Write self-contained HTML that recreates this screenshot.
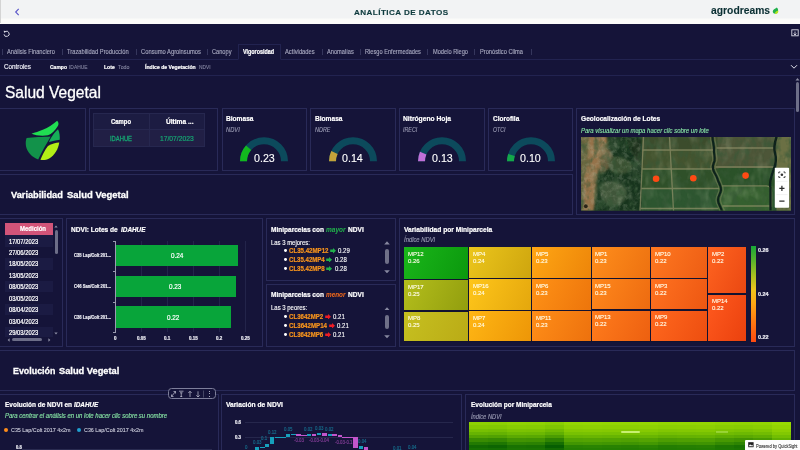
<!DOCTYPE html>
<html lang="es">
<head>
<meta charset="utf-8">
<title>Analítica de Datos</title>
<style>
*{box-sizing:border-box;margin:0;padding:0}
html,body{width:800px;height:450px;overflow:hidden;background:#151439;font-family:"Liberation Sans",sans-serif;color:#fff}
#root{position:relative;width:800px;height:450px;overflow:hidden;background:#151439}
.abs{position:absolute}
.hdr{left:0;top:0;width:800px;height:23.500px;background:linear-gradient(180deg,#f2f3f4 0,#f2f3f4 17.500px,#fbfbf9 19.500px,#fbfbf9 100%)}
.sep{top:49px;width:1px;height:6px;background:#35365c}
.hl{height:1px;background:#222350;left:0;width:800px}
.card{position:absolute;border:1px solid #292a58;background:#151439}
.t{position:absolute;white-space:nowrap}
.tm{position:absolute;overflow:hidden}
</style>
</head>
<body>
<div id="root">

<div class="abs hdr"></div>
<div class="abs" style="left:0;top:0;width:1.300px;height:23px;background:#d4d4d4"></div>
<svg class="abs" style="left:14px;top:7.500px" width="6" height="8" viewBox="0 0 6 8"><path d="M4.700 0.900 L1.700 4 L4.700 7.100" fill="none" stroke="#5b57c9" stroke-width="1.150"/></svg>
<div class="t" style="left:353.70px;top:8px;font-size:8.1px;line-height:9px;height:9px;color:#0f3b3e;font-weight:bold;-webkit-text-stroke:0.15px;letter-spacing:0.435px;transform:scaleX(1.0001);transform-origin:0 0;">ANALÍTICA DE DATOS</div>
<div class="t" style="left:710.90px;top:5px;font-size:10.3px;line-height:11px;height:11px;color:#0b2f33;font-weight:bold;-webkit-text-stroke:0.1px;letter-spacing:0.015px;transform:scaleX(1.0001);transform-origin:0 0;">agrodreams</div>
<svg class="abs" style="left:772px;top:7px" width="7.400" height="7.800" viewBox="0 0 10 10"><path d="M1 6 C1 3 4 2.500 6.500 0.500 C8.500 2 9 5 7 7.500 C5 9.500 1.500 9 1 6Z" fill="#22b14c"/><path d="M4 9 C4 6 6 5 8.600 4.400 C9 7 7 9.500 4 9Z" fill="#b5e61d"/></svg>
<svg class="abs" style="left:3px;top:29.500px" width="8" height="8" viewBox="0 0 8 8"><path d="M2 1.800 A2.600 2.600 0 1 1 1 4.300" fill="none" stroke="#dcdce8" stroke-width="0.950"/><path d="M0.700 0.800 L2.900 1 L1.300 3Z" fill="#dcdce8"/></svg>
<svg class="abs" style="left:790.500px;top:29.300px" width="8" height="8" viewBox="0 0 8 8"><rect x="0.800" y="0.800" width="6.400" height="6" fill="none" stroke="#d8d8e4" stroke-width="0.900"/><path d="M4 2.500 V6 M2.600 4.600 L4 6 L5.400 4.600" stroke="#d8d8e4" stroke-width="0.900" fill="none"/></svg>
<div class="t" style="left:7.00px;top:48px;font-size:6.4px;line-height:7px;height:7px;color:#a9aac0;-webkit-text-stroke:0.12px;transform:scaleX(0.8936);transform-origin:0 0;">Análisis Financiero</div>
<div class="t" style="left:67.00px;top:48px;font-size:6.4px;line-height:7px;height:7px;color:#a9aac0;-webkit-text-stroke:0.12px;transform:scaleX(0.9025);transform-origin:0 0;">Trazabilidad Producción</div>
<div class="t" style="left:141.00px;top:48px;font-size:6.4px;line-height:7px;height:7px;color:#a9aac0;-webkit-text-stroke:0.12px;transform:scaleX(0.9068);transform-origin:0 0;">Consumo Agroinsumos</div>
<div class="t" style="left:212.00px;top:48px;font-size:6.4px;line-height:7px;height:7px;color:#a9aac0;-webkit-text-stroke:0.12px;transform:scaleX(0.8840);transform-origin:0 0;">Canopy</div>
<div class="t" style="left:285.00px;top:48px;font-size:6.4px;line-height:7px;height:7px;color:#a9aac0;-webkit-text-stroke:0.12px;transform:scaleX(0.9090);transform-origin:0 0;">Actividades</div>
<div class="t" style="left:326.75px;top:48px;font-size:6.4px;line-height:7px;height:7px;color:#a9aac0;-webkit-text-stroke:0.12px;transform:scaleX(0.8846);transform-origin:0 0;">Anomalías</div>
<div class="t" style="left:365.00px;top:48px;font-size:6.4px;line-height:7px;height:7px;color:#a9aac0;-webkit-text-stroke:0.12px;transform:scaleX(0.8843);transform-origin:0 0;">Riesgo Enfermedades</div>
<div class="t" style="left:433.00px;top:48px;font-size:6.4px;line-height:7px;height:7px;color:#a9aac0;-webkit-text-stroke:0.12px;transform:scaleX(0.8863);transform-origin:0 0;">Modelo Riego</div>
<div class="t" style="left:480.00px;top:48px;font-size:6.4px;line-height:7px;height:7px;color:#a9aac0;-webkit-text-stroke:0.12px;transform:scaleX(0.8889);transform-origin:0 0;">Pronóstico Clima</div>
<div class="abs sep" style="left:2px"></div>
<div class="abs sep" style="left:62px"></div>
<div class="abs sep" style="left:136px"></div>
<div class="abs sep" style="left:207px"></div>
<div class="abs sep" style="left:322px"></div>
<div class="abs sep" style="left:360px"></div>
<div class="abs sep" style="left:426.5px"></div>
<div class="abs sep" style="left:474px"></div>
<div class="abs sep" style="left:530.5px"></div>
<div class="abs hl" style="top:59px"></div>
<div class="abs" style="left:238px;top:44px;width:43px;height:16px;border:1px solid #222350;border-bottom:1px solid #151439"></div>
<div class="t" style="left:243.00px;top:48px;font-size:6.3px;line-height:7px;height:7px;color:#fff;font-weight:bold;-webkit-text-stroke:0.22px;transform:scaleX(0.8542);transform-origin:0 0;">Vigorosidad</div>
<div class="t" style="left:3.75px;top:63px;font-size:6.6px;line-height:7px;height:7px;color:#eeeef6;-webkit-text-stroke:0.18px;transform:scaleX(0.9558);transform-origin:0 0;">Controles</div>
<div class="t" style="left:50.00px;top:63px;font-size:6.2px;line-height:7px;height:7px;color:#fff;font-weight:bold;-webkit-text-stroke:0.22px;transform:scaleX(0.8090);transform-origin:0 0;">Campo</div>
<div class="t" style="left:69.00px;top:63px;font-size:6.2px;line-height:7px;height:7px;color:#8586a2;-webkit-text-stroke:0.12px;transform:scaleX(0.7897);transform-origin:0 0;">IDAHUE</div>
<div class="t" style="left:103.75px;top:63px;font-size:6.2px;line-height:7px;height:7px;color:#fff;font-weight:bold;-webkit-text-stroke:0.22px;transform:scaleX(0.8214);transform-origin:0 0;">Lote</div>
<div class="t" style="left:117.50px;top:63px;font-size:6.2px;line-height:7px;height:7px;color:#8586a2;-webkit-text-stroke:0.12px;transform:scaleX(0.8553);transform-origin:0 0;">Todo</div>
<div class="t" style="left:145.00px;top:63px;font-size:6.2px;line-height:7px;height:7px;color:#fff;font-weight:bold;-webkit-text-stroke:0.22px;transform:scaleX(0.8275);transform-origin:0 0;">Índice de Vegetación</div>
<div class="t" style="left:198.50px;top:63px;font-size:6.2px;line-height:7px;height:7px;color:#8586a2;-webkit-text-stroke:0.12px;transform:scaleX(0.7763);transform-origin:0 0;">NDVI</div>
<svg class="abs" style="left:790px;top:64px" width="8" height="6" viewBox="0 0 8 6"><path d="M1 1.200 L4 4.200 L7 1.200" fill="none" stroke="#e0e0ea" stroke-width="1"/></svg>
<div class="abs hl" style="top:75px"></div>
<div class="t" style="left:4.50px;top:84px;font-size:15.7px;line-height:17px;height:17px;color:#fff;-webkit-text-stroke:0.3px;transform:scaleX(0.9907);transform-origin:0 0;">Salud Vegetal</div>
<div class="abs" style="left:796px;top:82px;width:3px;height:30px;background:#6d6e88;border-radius:2px"></div>
<svg class="abs" style="left:795px;top:77px" width="5" height="4" viewBox="0 0 5 4"><path d="M0.500 3.500 L2.500 1 L4.500 3.500Z" fill="#8c8da4"/></svg>
<div class="card" style="left:-1px;top:108px;width:87px;height:63px;"></div>
<div class="card" style="left:89px;top:108px;width:129px;height:63px;"></div>
<div class="card" style="left:222px;top:108px;width:85px;height:63px;"></div>
<div class="card" style="left:310px;top:108px;width:86px;height:63px;"></div>
<div class="card" style="left:399px;top:108px;width:86px;height:63px;"></div>
<div class="card" style="left:488px;top:108px;width:85px;height:63px;"></div>
<div class="card" style="left:576px;top:108px;width:219px;height:107px;"></div>
<div class="card" style="left:-1px;top:174px;width:574px;height:41px;"></div>
<div class="card" style="left:-1px;top:218px;width:64px;height:129px;"></div>
<div class="card" style="left:66px;top:218px;width:197px;height:129px;"></div>
<div class="card" style="left:266px;top:218px;width:130px;height:63px;"></div>
<div class="card" style="left:266px;top:284px;width:130px;height:63px;"></div>
<div class="card" style="left:399px;top:218px;width:396px;height:129px;"></div>
<div class="card" style="left:-1px;top:350px;width:796px;height:41px;"></div>
<div class="card" style="left:-1px;top:394px;width:220px;height:66px;"></div>
<div class="card" style="left:221px;top:394px;width:241px;height:66px;"></div>
<div class="card" style="left:465px;top:394px;width:330px;height:66px;"></div>
<svg class="abs" style="left:15px;top:112px" width="60" height="55" viewBox="0 0 491 450">
<path d="M135 178 C190 160 270 140 345 72 C358 85 358 100 352 112 C330 150 300 180 270 190 C220 198 170 192 135 178Z" fill="#20de52"/>
<path d="M95 212 C150 204 230 204 292 200 C260 260 220 320 190 388 C140 370 100 330 90 280 C86 250 88 230 95 212Z" fill="#12924a"/>
<path d="M352 142 C365 170 368 200 366 228 C335 232 305 238 278 246 C290 220 310 180 352 142Z" fill="#16ae58"/>
<path d="M362 250 C355 300 330 350 280 380 C255 392 230 395 208 390 C225 350 245 310 270 278 C300 262 335 252 362 250Z" fill="#b2ee16"/>
</svg>
<div class="abs" style="left:93px;top:112.600px;width:111.500px;height:17px;background:#1c1c42"></div>
<div class="abs" style="left:93px;top:129.600px;width:111.500px;height:17.900px;background:#211f45"></div>
<div class="abs" style="left:93px;top:112.600px;width:111.500px;height:34.900px;border:1px solid #26274f"></div>
<div class="abs" style="left:93px;top:129.300px;width:111.500px;height:1px;background:#26274f"></div>
<div class="abs" style="left:148.500px;top:112.600px;width:1px;height:34.900px;background:#26274f"></div>
<div class="t" style="left:111.25px;top:118px;font-size:6.6px;line-height:7px;height:7px;color:#fff;font-weight:bold;-webkit-text-stroke:0.22px;transform:scaleX(0.8941);transform-origin:0 0;">Campo</div>
<div class="t" style="left:166.25px;top:118px;font-size:6.6px;line-height:7px;height:7px;color:#fff;font-weight:bold;-webkit-text-stroke:0.22px;transform:scaleX(0.9998);transform-origin:0 0;">Última ...</div>
<div class="t" style="left:110.00px;top:135px;font-size:6.8px;line-height:7px;height:7px;color:#16a472;-webkit-text-stroke:0.3px;transform:scaleX(0.8563);transform-origin:0 0;">IDAHUE</div>
<div class="t" style="left:160.00px;top:135px;font-size:6.8px;line-height:7px;height:7px;color:#16a472;-webkit-text-stroke:0.2px;transform:scaleX(0.9917);transform-origin:0 0;">17/07/2023</div>
<div class="t" style="left:225.75px;top:114px;font-size:7.3px;line-height:9px;height:9px;color:#fff;font-weight:bold;-webkit-text-stroke:0.22px;transform:scaleX(0.9037);transform-origin:0 0;">Biomasa</div>
<div class="t" style="left:225.75px;top:126px;font-size:6.3px;line-height:7px;height:7px;color:#9c9db5;font-style:italic;-webkit-text-stroke:0.12px;transform:scaleX(0.9135);transform-origin:0 0;">NDVI</div>
<svg class="abs" style="left:238px;top:135px" width="52" height="28" viewBox="238 135 52 28"><path d="M243.50 161.30 A20.5 20.5 0 0 1 284.50 161.30" fill="none" stroke="#0c4a5c" stroke-width="7"/><path d="M243.50 161.30 A20.5 20.5 0 0 1 248.62 147.74" fill="none" stroke="#12b81e" stroke-width="7"/></svg>
<div class="t" style="left:253.60px;top:152px;font-size:11.4px;line-height:12px;height:12px;color:#fff;-webkit-text-stroke:0.12px;transform:scaleX(0.9374);transform-origin:0 0;">0.23</div>
<div class="t" style="left:314.50px;top:114px;font-size:7.3px;line-height:9px;height:9px;color:#fff;font-weight:bold;-webkit-text-stroke:0.22px;transform:scaleX(0.9037);transform-origin:0 0;">Biomasa</div>
<div class="t" style="left:314.50px;top:126px;font-size:6.3px;line-height:7px;height:7px;color:#9c9db5;font-style:italic;-webkit-text-stroke:0.12px;transform:scaleX(0.8683);transform-origin:0 0;">NDRE</div>
<svg class="abs" style="left:326.7px;top:135px" width="52" height="28" viewBox="326.7 135 52 28"><path d="M332.20 161.30 A20.5 20.5 0 0 1 373.20 161.30" fill="none" stroke="#0c4a5c" stroke-width="7"/><path d="M332.20 161.30 A20.5 20.5 0 0 1 334.15 152.57" fill="none" stroke="#c3a23a" stroke-width="7"/></svg>
<div class="t" style="left:342.30px;top:152px;font-size:11.4px;line-height:12px;height:12px;color:#fff;-webkit-text-stroke:0.12px;transform:scaleX(0.9374);transform-origin:0 0;">0.14</div>
<div class="t" style="left:403.25px;top:114px;font-size:7.3px;line-height:9px;height:9px;color:#fff;font-weight:bold;-webkit-text-stroke:0.22px;transform:scaleX(0.9175);transform-origin:0 0;">Nitrógeno Hoja</div>
<div class="t" style="left:403.25px;top:126px;font-size:6.3px;line-height:7px;height:7px;color:#9c9db5;font-style:italic;-webkit-text-stroke:0.12px;transform:scaleX(0.8481);transform-origin:0 0;">IRECI</div>
<svg class="abs" style="left:416px;top:135px" width="52" height="28" viewBox="416 135 52 28"><path d="M421.50 161.30 A20.5 20.5 0 0 1 462.50 161.30" fill="none" stroke="#0c4a5c" stroke-width="7"/><path d="M421.50 161.30 A20.5 20.5 0 0 1 423.19 153.16" fill="none" stroke="#c070d8" stroke-width="7"/></svg>
<div class="t" style="left:431.60px;top:152px;font-size:11.4px;line-height:12px;height:12px;color:#fff;-webkit-text-stroke:0.12px;transform:scaleX(0.9374);transform-origin:0 0;">0.13</div>
<div class="t" style="left:492.50px;top:114px;font-size:7.3px;line-height:9px;height:9px;color:#fff;font-weight:bold;-webkit-text-stroke:0.22px;transform:scaleX(0.8866);transform-origin:0 0;">Clorofila</div>
<div class="t" style="left:492.50px;top:126px;font-size:6.3px;line-height:7px;height:7px;color:#9c9db5;font-style:italic;-webkit-text-stroke:0.12px;transform:scaleX(0.8306);transform-origin:0 0;">OTCI</div>
<svg class="abs" style="left:504.79999999999995px;top:135px" width="52" height="28" viewBox="504.79999999999995 135 52 28"><path d="M510.30 161.30 A20.5 20.5 0 0 1 551.30 161.30" fill="none" stroke="#0c4a5c" stroke-width="7"/><path d="M510.30 161.30 A20.5 20.5 0 0 1 511.30 154.97" fill="none" stroke="#14a84a" stroke-width="7"/></svg>
<div class="t" style="left:520.40px;top:152px;font-size:11.4px;line-height:12px;height:12px;color:#fff;-webkit-text-stroke:0.12px;transform:scaleX(0.9374);transform-origin:0 0;">0.10</div>
<div class="t" style="left:580.80px;top:114px;font-size:7.3px;line-height:9px;height:9px;color:#fff;font-weight:bold;-webkit-text-stroke:0.22px;transform:scaleX(0.9039);transform-origin:0 0;">Geolocalización de Lotes</div>
<div class="t" style="left:580.80px;top:127px;font-size:6.6px;line-height:7px;height:7px;color:#86e3a4;font-style:italic;-webkit-text-stroke:0.12px;transform:scaleX(0.9110);transform-origin:0 0;">Para visualizar un mapa hacer clic sobre un lote</div>
<svg class="abs" style="left:580.500px;top:137px" width="210" height="73.500" viewBox="580.500 137 210 73.500">
<defs><clipPath id="mc"><rect x="580.500" y="137" width="210" height="73.500"/></clipPath><clipPath id="mcl"><rect x="580.500" y="137" width="60" height="73.500"/></clipPath><filter id="nz" x="0" y="0" width="100%" height="100%"><feTurbulence type="fractalNoise" baseFrequency="0.16 0.1" numOctaves="3" seed="3" result="n"/><feColorMatrix in="n" type="matrix" values="0 0 0 0 0.04  0 0 0 0 0.1  0 0 0 0 0.04  2.2 2.2 0 0 -2.0"/></filter><filter id="nzl" x="0" y="0" width="100%" height="100%"><feTurbulence type="fractalNoise" baseFrequency="0.22" numOctaves="3" seed="11" result="n"/><feColorMatrix in="n" type="matrix" values="0 0 0 0 0.5  0 0 0 0 0.56  0 0 0 0 0.42  0 2.4 2.0 0 -2.0"/></filter><filter id="nz2" x="0" y="0" width="100%" height="100%"><feTurbulence type="fractalNoise" baseFrequency="0.09 0.05" numOctaves="3" seed="8" result="n"/><feColorMatrix in="n" type="matrix" values="0 0 0 0 0.45  0 0 0 0 0.52  0 0 0 0 0.34  2.4 2.0 0 0 -2.1"/></filter><filter id="bl"><feGaussianBlur stdDeviation="1.1"/></filter><filter id="bl2"><feGaussianBlur stdDeviation="0.45"/></filter></defs><g clip-path="url(#mc)">
<rect x="580" y="136" width="212" height="76" fill="#36502e"/>
<rect x="641" y="137" width="150" height="13" fill="#3c4c2c"/>
<rect x="641" y="150" width="150" height="19" fill="#44542f"/>
<rect x="641" y="169" width="150" height="20" fill="#2f5029"/>
<rect x="641" y="188.500" width="150" height="23" fill="#2d5630"/>
<rect x="717" y="137" width="60" height="31" fill="#4d5638"/>
<rect x="718" y="186" width="54" height="25" fill="#35602f"/>
<rect x="718" y="168" width="56" height="18" fill="#2b5229"/>
<rect x="776" y="137" width="15" height="74" fill="#6b7044"/>
<rect x="580" y="136" width="61" height="76" fill="#17341d"/>
<g filter="url(#bl)"><path d="M580 136 H606 C609 146 606 152 603 160 C598 170 596 178 596 186 C596 196 594 204 593 212 H580Z" fill="#957249"/><path d="M580 136 H588 C590 150 586 165 584 180 C583 195 584 205 583 212 H580Z" fill="#6c6840"/><path d="M600 150 C606 146 612 150 612 158 C611 166 606 172 600 174 C598 166 598 156 600 150Z" fill="#7a6844" opacity=".8"/><path d="M608 158 C616 154 628 158 632 166 C630 174 620 176 612 172 C607 168 606 162 608 158Z" fill="#46583a" opacity=".8"/><path d="M600 184 C608 178 620 182 626 190 C628 200 620 207 610 206 C602 203 597 194 600 184Z" fill="#4a5e42" opacity=".8"/><path d="M626 140 L640 139 L641 165 C634 160 628 152 626 140Z" fill="#122b18"/></g>
<rect x="580" y="136" width="61" height="76" filter="url(#nzl)" opacity=".22" clip-path="url(#mcl)"/>
<rect x="580" y="136" width="212" height="76" filter="url(#nz2)" opacity=".2"/>
<rect x="580" y="136" width="212" height="76" filter="url(#nz)" opacity=".6"/>
<g stroke="#92926a" stroke-width="1.300" fill="none" opacity=".7" filter="url(#bl2)"><path d="M643 137 L639.500 211"/><path d="M669 137 L673 211"/><path d="M642 150 H713"/><path d="M641.500 169 H712"/><path d="M640.500 188.500 H719"/><path d="M640 208.500 H718"/><path d="M716 148 H773"/><path d="M715 167 H774"/><path d="M721 185.800 H766 C770 186 771 189 771 192 V206 H722"/><path d="M710 137 C710 142 712 146 711.500 150 C711 154 713 157 712 161 C711 164 709.500 166 710.500 169 C711.500 173 714 175 715 179 C716 183 719 186 718.500 190 C718 194 715.500 196 715.500 200 C715.500 204 718 206 719.500 211" opacity=".55"/><path d="M714.200 137 C714.200 142 716.200 146 715.700 150 C715.200 154 717.200 157 716.200 161 C715.200 164 713.700 166 714.700 169 C715.700 173 718.200 175 719.200 179 C720.200 183 723.200 186 722.700 190 C722.200 194 720 196 720 200 C720 204 722.500 206 724 211" opacity=".6"/></g>
<g fill="none" stroke="#10241a" stroke-width="2.600" stroke-linecap="round" filter="url(#bl2)"><path d="M712 137 C712 142 714 146 713.500 150 C713 154 715 157 714 161 C713 164 711.500 166 712.500 169 C713.500 173 716 175 717 179 C718 183 721 186 720.500 190 C720 194 717.500 196 717.500 200 C717.500 204 720 206 721.500 211" stroke-width="2.100"/><path d="M776 137 C774 143 773 148 774.500 153 C776 158 775.500 164 773 170 C770 178 768.500 183 770 188 V211" stroke-width="2.400"/></g>
<circle cx="585.300" cy="206.300" r="2.300" fill="#2a2418" stroke="#a89868" stroke-width="0.500"/>
<circle cx="655.6" cy="178.7" r="3.300" fill="#ff4a14"/>
<circle cx="692.8" cy="178.2" r="3.300" fill="#ff4a14"/>
<circle cx="745.1" cy="175.6" r="3.300" fill="#ff4a14"/>
<rect x="774.300" y="167.800" width="14.300" height="40" rx="0.800" fill="#ffffff"/>
<path d="M776 181.300 H787 M776 194.600 H787" stroke="#e4e4e4" stroke-width="0.500"/>
<g fill="none" stroke="#333" stroke-width="0.900"><path d="M778.300 173.400 V172 H779.800 M783 172 H784.500 V173.400 M784.500 176 V177.400 H783 M779.800 177.400 H778.300 V176"/></g><circle cx="781.400" cy="174.700" r="1.300" fill="#333"/>
<path d="M778.800 188.300 H784 M781.400 185.700 V190.900" stroke="#2c2c2c" stroke-width="1.250"/>
<path d="M778.800 201.200 H784" stroke="#2c2c2c" stroke-width="1.250"/>
</g></svg>
<div class="t" style="left:10.50px;top:189px;font-size:9.4px;line-height:11px;height:11px;color:#fff;font-weight:bold;-webkit-text-stroke:0.3px;transform:scaleX(0.9855);transform-origin:0 0;">Variabilidad</div>
<div class="t" style="left:66.50px;top:189px;font-size:9.4px;line-height:11px;height:11px;color:#fff;font-weight:bold;-webkit-text-stroke:0.3px;transform:scaleX(1.0102);transform-origin:0 0;">Salud Vegetal</div>
<div class="t" style="left:12.50px;top:365px;font-size:9.4px;line-height:11px;height:11px;color:#fff;font-weight:bold;-webkit-text-stroke:0.3px;transform:scaleX(0.9462);transform-origin:0 0;">Evolución</div>
<div class="t" style="left:59.00px;top:365px;font-size:9.4px;line-height:11px;height:11px;color:#fff;font-weight:bold;-webkit-text-stroke:0.3px;transform:scaleX(0.9898);transform-origin:0 0;">Salud Vegetal</div>
<div class="abs" style="left:4.500px;top:222.500px;width:48.500px;height:12.500px;background:#d25479"></div>
<div class="t" style="left:19.50px;top:225px;font-size:6.6px;line-height:7px;height:7px;color:#fff;font-weight:bold;-webkit-text-stroke:0.22px;transform:scaleX(0.9090);transform-origin:0 0;">Medición</div>
<div class="abs" style="left:4.500px;top:235.3px;width:48.500px;height:11.4px;background:#1b1b43"></div>
<div class="t" style="left:8.75px;top:238px;font-size:6.6px;line-height:7px;height:7px;color:#fff;-webkit-text-stroke:0.22px;transform:scaleX(0.8855);transform-origin:0 0;">17/07/2023</div>
<div class="t" style="left:8.75px;top:249px;font-size:6.6px;line-height:7px;height:7px;color:#fff;-webkit-text-stroke:0.22px;transform:scaleX(0.8855);transform-origin:0 0;">27/06/2023</div>
<div class="abs" style="left:4.500px;top:258.2px;width:48.500px;height:11.4px;background:#1b1b43"></div>
<div class="t" style="left:8.75px;top:260px;font-size:6.6px;line-height:7px;height:7px;color:#fff;-webkit-text-stroke:0.22px;transform:scaleX(0.8855);transform-origin:0 0;">18/05/2023</div>
<div class="t" style="left:8.75px;top:272px;font-size:6.6px;line-height:7px;height:7px;color:#fff;-webkit-text-stroke:0.22px;transform:scaleX(0.8855);transform-origin:0 0;">13/05/2023</div>
<div class="abs" style="left:4.500px;top:281.0px;width:48.500px;height:11.4px;background:#1b1b43"></div>
<div class="t" style="left:8.75px;top:283px;font-size:6.6px;line-height:7px;height:7px;color:#fff;-webkit-text-stroke:0.22px;transform:scaleX(0.8855);transform-origin:0 0;">08/05/2023</div>
<div class="t" style="left:8.75px;top:295px;font-size:6.6px;line-height:7px;height:7px;color:#fff;-webkit-text-stroke:0.22px;transform:scaleX(0.8855);transform-origin:0 0;">03/05/2023</div>
<div class="abs" style="left:4.500px;top:303.9px;width:48.500px;height:11.4px;background:#1b1b43"></div>
<div class="t" style="left:8.75px;top:306px;font-size:6.6px;line-height:7px;height:7px;color:#fff;-webkit-text-stroke:0.22px;transform:scaleX(0.8855);transform-origin:0 0;">08/04/2023</div>
<div class="t" style="left:8.75px;top:318px;font-size:6.6px;line-height:7px;height:7px;color:#fff;-webkit-text-stroke:0.22px;transform:scaleX(0.8855);transform-origin:0 0;">03/04/2023</div>
<div class="abs" style="left:4.500px;top:326.7px;width:48.500px;height:10.3px;background:#1b1b43"></div>
<div class="t" style="left:8.75px;top:329px;font-size:6.6px;line-height:7px;height:7px;color:#fff;-webkit-text-stroke:0.22px;transform:scaleX(0.8855);transform-origin:0 0;">29/03/2023</div>
<div class="abs" style="left:0;top:337px;width:54px;height:8.500px;background:#151439"></div>
<div class="abs" style="left:54.500px;top:230px;width:3px;height:24px;background:#6d6e88;border-radius:1.500px"></div>
<svg class="abs" style="left:54px;top:224.500px" width="4" height="3" viewBox="0 0 4 3"><path d="M0.300 2.600 L2 0.600 L3.700 2.600Z" fill="#8c8da4"/></svg>
<svg class="abs" style="left:53.500px;top:331.500px" width="4" height="3" viewBox="0 0 4 3"><path d="M0.300 0.400 L2 2.400 L3.700 0.400Z" fill="#8c8da4"/></svg>
<div class="abs" style="left:11.500px;top:338px;width:30px;height:3px;background:#6d6e88;border-radius:1.500px"></div>
<svg class="abs" style="left:6.500px;top:337.500px" width="3" height="4" viewBox="0 0 3 4"><path d="M2.600 0.300 L0.600 2 L2.600 3.700Z" fill="#8c8da4"/></svg>
<svg class="abs" style="left:47.500px;top:337.500px" width="3" height="4" viewBox="0 0 3 4"><path d="M0.400 0.300 L2.400 2 L0.400 3.700Z" fill="#8c8da4"/></svg>
<div class="t" style="left:70.75px;top:225px;font-size:7.5px;line-height:9px;height:9px;color:#fff;font-weight:bold;-webkit-text-stroke:0.22px;transform:scaleX(0.8764);transform-origin:0 0;">NDVI: Lotes de</div>
<div class="t" style="left:121.25px;top:225px;font-size:7.5px;line-height:9px;height:9px;color:#fff;font-weight:bold;font-style:italic;-webkit-text-stroke:0.22px;transform:scaleX(0.8521);transform-origin:0 0;">IDAHUE</div>
<div class="abs" style="left:141px;top:241px;width:1px;height:91px;background:#23244a"></div>
<div class="abs" style="left:167px;top:241px;width:1px;height:91px;background:#23244a"></div>
<div class="abs" style="left:193px;top:241px;width:1px;height:91px;background:#23244a"></div>
<div class="abs" style="left:219px;top:241px;width:1px;height:91px;background:#23244a"></div>
<div class="abs" style="left:245px;top:241px;width:1px;height:91px;background:#23244a"></div>
<div class="abs" style="left:115px;top:240.500px;width:1px;height:92px;background:#9a9bb0"></div>
<div class="abs" style="left:113px;top:240.5px;width:2px;height:1px;background:#9a9bb0"></div>
<div class="abs" style="left:113px;top:270.9px;width:2px;height:1px;background:#9a9bb0"></div>
<div class="abs" style="left:113px;top:301.6px;width:2px;height:1px;background:#9a9bb0"></div>
<div class="abs" style="left:113px;top:331.8px;width:2px;height:1px;background:#9a9bb0"></div>
<div class="abs" style="left:115.500px;top:244.8px;width:122.5px;height:21.300px;background:#08a53a"></div>
<div class="t" style="left:170.55px;top:251px;font-size:7.5px;line-height:9px;height:9px;color:#fff;-webkit-text-stroke:0.2px;transform:scaleX(0.8495);transform-origin:0 0;">0.24</div>
<div class="t" style="left:73.75px;top:253px;font-size:4.6px;line-height:5px;height:5px;color:#e8e8f0;font-weight:bold;-webkit-text-stroke:0.22px;transform:scaleX(0.9046);transform-origin:0 0;">C35 Lap/Colt 201...</div>
<div class="abs" style="left:115.500px;top:275.5px;width:120.1px;height:21.300px;background:#08a53a"></div>
<div class="t" style="left:169.35px;top:282px;font-size:7.5px;line-height:9px;height:9px;color:#fff;-webkit-text-stroke:0.2px;transform:scaleX(0.8495);transform-origin:0 0;">0.23</div>
<div class="t" style="left:73.75px;top:284px;font-size:4.6px;line-height:5px;height:5px;color:#e8e8f0;font-weight:bold;-webkit-text-stroke:0.22px;transform:scaleX(0.8989);transform-origin:0 0;">C46 San/Colt 201...</div>
<div class="abs" style="left:115.500px;top:306.4px;width:115.30000000000001px;height:21.300px;background:#08a53a"></div>
<div class="t" style="left:166.95px;top:313px;font-size:7.5px;line-height:9px;height:9px;color:#fff;-webkit-text-stroke:0.2px;transform:scaleX(0.8495);transform-origin:0 0;">0.22</div>
<div class="t" style="left:73.75px;top:315px;font-size:4.6px;line-height:5px;height:5px;color:#e8e8f0;font-weight:bold;-webkit-text-stroke:0.22px;transform:scaleX(0.9046);transform-origin:0 0;">C36 Lap/Colt 201...</div>
<div class="t" style="left:113.75px;top:335px;font-size:5px;line-height:6px;height:6px;color:#e8e8f0;font-weight:bold;-webkit-text-stroke:0.22px;transform:scaleX(0.9000);transform-origin:0 0;">0</div>
<div class="t" style="left:136.62px;top:335px;font-size:5px;line-height:6px;height:6px;color:#e8e8f0;font-weight:bold;-webkit-text-stroke:0.22px;transform:scaleX(0.9000);transform-origin:0 0;">0.05</div>
<div class="t" style="left:163.87px;top:335px;font-size:5px;line-height:6px;height:6px;color:#e8e8f0;font-weight:bold;-webkit-text-stroke:0.22px;transform:scaleX(0.9000);transform-origin:0 0;">0.1</div>
<div class="t" style="left:188.62px;top:335px;font-size:5px;line-height:6px;height:6px;color:#e8e8f0;font-weight:bold;-webkit-text-stroke:0.22px;transform:scaleX(0.9000);transform-origin:0 0;">0.15</div>
<div class="t" style="left:215.87px;top:335px;font-size:5px;line-height:6px;height:6px;color:#e8e8f0;font-weight:bold;-webkit-text-stroke:0.22px;transform:scaleX(0.9000);transform-origin:0 0;">0.2</div>
<div class="t" style="left:240.62px;top:335px;font-size:5px;line-height:6px;height:6px;color:#e8e8f0;font-weight:bold;-webkit-text-stroke:0.22px;transform:scaleX(0.9000);transform-origin:0 0;">0.25</div>
<div class="t" style="left:270.50px;top:225px;font-size:7.3px;line-height:9px;height:9px;color:#fff;font-weight:bold;-webkit-text-stroke:0.22px;transform:scaleX(0.8948);transform-origin:0 0;">Miniparcelas con</div>
<div class="t" style="left:326.25px;top:225px;font-size:7.3px;line-height:9px;height:9px;color:#22b14c;font-weight:bold;font-style:italic;-webkit-text-stroke:0.05px;transform:scaleX(0.8900);transform-origin:0 0;">mayor</div>
<div class="t" style="left:347.50px;top:225px;font-size:7.3px;line-height:9px;height:9px;color:#fff;font-weight:bold;-webkit-text-stroke:0.22px;transform:scaleX(0.9030);transform-origin:0 0;">NDVI</div>
<div class="t" style="left:270.50px;top:239px;font-size:6.4px;line-height:7px;height:7px;color:#fff;-webkit-text-stroke:0.12px;transform:scaleX(0.9291);transform-origin:0 0;">Las 3 mejores:</div>
<div class="abs" style="left:284.300px;top:249.35px;width:2.800px;height:2.800px;border-radius:50%;background:#fff"></div>
<div class="t" style="left:288.75px;top:247px;font-size:7px;line-height:7px;height:7px;color:#f7941d;font-weight:bold;-webkit-text-stroke:0.22px;transform:scaleX(0.8751);transform-origin:0 0;">CL35.42MP12</div>
<svg class="abs" style="left:330.15px;top:248.15px" width="6.200" height="5.600" viewBox="0 0 6.200 5.600"><path d="M0.200 1.500 H3 V0.100 L6.100 2.800 L3 5.500 V4.100 H0.200Z" fill="#22b14c"/></svg>
<div class="t" style="left:338.25px;top:247px;font-size:7px;line-height:7px;height:7px;color:#fff;-webkit-text-stroke:0.12px;transform:scaleX(0.8624);transform-origin:0 0;">0.29</div>
<div class="abs" style="left:284.300px;top:258.10px;width:2.800px;height:2.800px;border-radius:50%;background:#fff"></div>
<div class="t" style="left:288.75px;top:256px;font-size:7px;line-height:7px;height:7px;color:#f7941d;font-weight:bold;-webkit-text-stroke:0.22px;transform:scaleX(0.8668);transform-origin:0 0;">CL35.42MP4</div>
<svg class="abs" style="left:326.40px;top:256.90px" width="6.200" height="5.600" viewBox="0 0 6.200 5.600"><path d="M0.200 1.500 H3 V0.100 L6.100 2.800 L3 5.500 V4.100 H0.200Z" fill="#22b14c"/></svg>
<div class="t" style="left:334.50px;top:256px;font-size:7px;line-height:7px;height:7px;color:#fff;-webkit-text-stroke:0.12px;transform:scaleX(0.8624);transform-origin:0 0;">0.28</div>
<div class="abs" style="left:284.300px;top:266.80px;width:2.800px;height:2.800px;border-radius:50%;background:#fff"></div>
<div class="t" style="left:288.75px;top:265px;font-size:7px;line-height:7px;height:7px;color:#f7941d;font-weight:bold;-webkit-text-stroke:0.22px;transform:scaleX(0.8668);transform-origin:0 0;">CL35.42MP8</div>
<svg class="abs" style="left:326.40px;top:265.60px" width="6.200" height="5.600" viewBox="0 0 6.200 5.600"><path d="M0.200 1.500 H3 V0.100 L6.100 2.800 L3 5.500 V4.100 H0.200Z" fill="#22b14c"/></svg>
<div class="t" style="left:334.50px;top:265px;font-size:7px;line-height:7px;height:7px;color:#fff;-webkit-text-stroke:0.12px;transform:scaleX(0.8624);transform-origin:0 0;">0.28</div>
<svg class="abs" style="left:384px;top:241.3px" width="6" height="3.600" viewBox="0 0 6 3.600"><path d="M0.200 3.400 L3 0.300 L5.800 3.400Z" fill="#8788a0"/></svg>
<div class="abs" style="left:384.600px;top:249.0px;width:4.800px;height:14.500px;background:#6f7088;border-radius:2.400px"></div>
<svg class="abs" style="left:384px;top:269.8px" width="6" height="3.600" viewBox="0 0 6 3.600"><path d="M0.200 0.200 L3 3.300 L5.800 0.200Z" fill="#8788a0"/></svg>
<div class="t" style="left:270.50px;top:290px;font-size:7.3px;line-height:9px;height:9px;color:#fff;font-weight:bold;-webkit-text-stroke:0.22px;transform:scaleX(0.8948);transform-origin:0 0;">Miniparcelas con</div>
<div class="t" style="left:326.25px;top:290px;font-size:7.3px;line-height:9px;height:9px;color:#f26a1b;font-weight:bold;font-style:italic;-webkit-text-stroke:0.05px;transform:scaleX(0.8740);transform-origin:0 0;">menor</div>
<div class="t" style="left:347.50px;top:290px;font-size:7.3px;line-height:9px;height:9px;color:#fff;font-weight:bold;-webkit-text-stroke:0.22px;transform:scaleX(0.9030);transform-origin:0 0;">NDVI</div>
<div class="t" style="left:270.50px;top:304px;font-size:6.4px;line-height:7px;height:7px;color:#fff;-webkit-text-stroke:0.12px;transform:scaleX(0.9347);transform-origin:0 0;">Las 3 peores:</div>
<div class="abs" style="left:284.300px;top:314.80px;width:2.800px;height:2.800px;border-radius:50%;background:#fff"></div>
<div class="t" style="left:288.75px;top:313px;font-size:7px;line-height:7px;height:7px;color:#f7941d;font-weight:bold;-webkit-text-stroke:0.22px;transform:scaleX(0.8715);transform-origin:0 0;">CL3642MP2</div>
<svg class="abs" style="left:324.90px;top:313.60px" width="6.200" height="5.600" viewBox="0 0 6.200 5.600"><path d="M0.200 1.500 H3 V0.100 L6.100 2.800 L3 5.500 V4.100 H0.200Z" fill="#ee1c25"/></svg>
<div class="t" style="left:333.00px;top:313px;font-size:7px;line-height:7px;height:7px;color:#fff;-webkit-text-stroke:0.12px;transform:scaleX(0.8624);transform-origin:0 0;">0.21</div>
<div class="abs" style="left:284.300px;top:323.80px;width:2.800px;height:2.800px;border-radius:50%;background:#fff"></div>
<div class="t" style="left:288.75px;top:322px;font-size:7px;line-height:7px;height:7px;color:#f7941d;font-weight:bold;-webkit-text-stroke:0.22px;transform:scaleX(0.8798);transform-origin:0 0;">CL3642MP14</div>
<svg class="abs" style="left:328.65px;top:322.60px" width="6.200" height="5.600" viewBox="0 0 6.200 5.600"><path d="M0.200 1.500 H3 V0.100 L6.100 2.800 L3 5.500 V4.100 H0.200Z" fill="#ee1c25"/></svg>
<div class="t" style="left:336.75px;top:322px;font-size:7px;line-height:7px;height:7px;color:#fff;-webkit-text-stroke:0.12px;transform:scaleX(0.8624);transform-origin:0 0;">0.21</div>
<div class="abs" style="left:284.300px;top:333.00px;width:2.800px;height:2.800px;border-radius:50%;background:#fff"></div>
<div class="t" style="left:288.75px;top:331px;font-size:7px;line-height:7px;height:7px;color:#f7941d;font-weight:bold;-webkit-text-stroke:0.22px;transform:scaleX(0.8715);transform-origin:0 0;">CL3642MP6</div>
<svg class="abs" style="left:324.90px;top:331.80px" width="6.200" height="5.600" viewBox="0 0 6.200 5.600"><path d="M0.200 1.500 H3 V0.100 L6.100 2.800 L3 5.500 V4.100 H0.200Z" fill="#ee1c25"/></svg>
<div class="t" style="left:333.00px;top:331px;font-size:7px;line-height:7px;height:7px;color:#fff;-webkit-text-stroke:0.12px;transform:scaleX(0.8624);transform-origin:0 0;">0.21</div>
<svg class="abs" style="left:384px;top:306.8px" width="6" height="3.600" viewBox="0 0 6 3.600"><path d="M0.200 3.400 L3 0.300 L5.800 3.400Z" fill="#8788a0"/></svg>
<div class="abs" style="left:384.600px;top:314.5px;width:4.800px;height:14.500px;background:#6f7088;border-radius:2.400px"></div>
<svg class="abs" style="left:384px;top:335.3px" width="6" height="3.600" viewBox="0 0 6 3.600"><path d="M0.200 0.200 L3 3.300 L5.800 0.200Z" fill="#8788a0"/></svg>
<div class="t" style="left:403.75px;top:225px;font-size:7.3px;line-height:9px;height:9px;color:#fff;font-weight:bold;-webkit-text-stroke:0.22px;transform:scaleX(0.9102);transform-origin:0 0;">Variabilidad por Miniparcela</div>
<div class="t" style="left:403.75px;top:236px;font-size:6.3px;line-height:7px;height:7px;color:#9c9db5;font-style:italic;-webkit-text-stroke:0.12px;transform:scaleX(0.9297);transform-origin:0 0;">Índice NDVI</div>
<div class="abs" style="left:403.500px;top:246.500px;width:342.600px;height:95.200px;background:#121230"></div>
<div class="tm" style="left:404px;top:247px;width:64.20px;height:32.00px;background:linear-gradient(115deg,#1ab61a,#0b980d)"></div>
<div class="t" style="left:407.50px;top:250px;font-size:6.1px;line-height:7px;height:7px;color:#fffce8;-webkit-text-stroke:0.12px;transform:scaleX(0.9850);transform-origin:0 0;">MP12</div>
<div class="t" style="left:407.50px;top:257px;font-size:6.1px;line-height:7px;height:7px;color:#fffce8;-webkit-text-stroke:0.12px;transform:scaleX(0.9850);transform-origin:0 0;">0.26</div>
<div class="tm" style="left:404px;top:280.2px;width:64.20px;height:30.20px;background:linear-gradient(115deg,#b4be1c,#929e0e)"></div>
<div class="t" style="left:407.50px;top:283px;font-size:6.1px;line-height:7px;height:7px;color:#fffce8;-webkit-text-stroke:0.12px;transform:scaleX(0.9850);transform-origin:0 0;">MP17</div>
<div class="t" style="left:407.50px;top:290px;font-size:6.1px;line-height:7px;height:7px;color:#fffce8;-webkit-text-stroke:0.12px;transform:scaleX(0.9850);transform-origin:0 0;">0.25</div>
<div class="tm" style="left:404px;top:311.6px;width:64.20px;height:29.60px;background:linear-gradient(115deg,#c6c020,#baab16)"></div>
<div class="t" style="left:407.50px;top:314px;font-size:6.1px;line-height:7px;height:7px;color:#fffce8;-webkit-text-stroke:0.12px;transform:scaleX(0.9850);transform-origin:0 0;">MP8</div>
<div class="t" style="left:407.50px;top:321px;font-size:6.1px;line-height:7px;height:7px;color:#fffce8;-webkit-text-stroke:0.12px;transform:scaleX(0.9850);transform-origin:0 0;">0.25</div>
<div class="tm" style="left:469.4px;top:247px;width:61.60px;height:30.60px;background:linear-gradient(115deg,#ecc61c,#cea50e)"></div>
<div class="t" style="left:472.90px;top:250px;font-size:6.1px;line-height:7px;height:7px;color:#fffce8;-webkit-text-stroke:0.12px;transform:scaleX(0.9850);transform-origin:0 0;">MP4</div>
<div class="t" style="left:472.90px;top:257px;font-size:6.1px;line-height:7px;height:7px;color:#fffce8;-webkit-text-stroke:0.12px;transform:scaleX(0.9850);transform-origin:0 0;">0.24</div>
<div class="tm" style="left:469.4px;top:278.8px;width:61.60px;height:31.20px;background:linear-gradient(115deg,#ffc61a,#e4a70d)"></div>
<div class="t" style="left:472.90px;top:282px;font-size:6.1px;line-height:7px;height:7px;color:#fffce8;-webkit-text-stroke:0.12px;transform:scaleX(0.9850);transform-origin:0 0;">MP16</div>
<div class="t" style="left:472.90px;top:289px;font-size:6.1px;line-height:7px;height:7px;color:#fffce8;-webkit-text-stroke:0.12px;transform:scaleX(0.9850);transform-origin:0 0;">0.24</div>
<div class="tm" style="left:469.4px;top:311.2px;width:61.60px;height:30.00px;background:linear-gradient(115deg,#ffb614,#ed9607)"></div>
<div class="t" style="left:472.90px;top:314px;font-size:6.1px;line-height:7px;height:7px;color:#fffce8;-webkit-text-stroke:0.12px;transform:scaleX(0.9850);transform-origin:0 0;">MP7</div>
<div class="t" style="left:472.90px;top:321px;font-size:6.1px;line-height:7px;height:7px;color:#fffce8;-webkit-text-stroke:0.12px;transform:scaleX(0.9850);transform-origin:0 0;">0.24</div>
<div class="tm" style="left:532.2px;top:247px;width:58.40px;height:30.60px;background:linear-gradient(115deg,#ffa614,#ed8509)"></div>
<div class="t" style="left:535.70px;top:250px;font-size:6.1px;line-height:7px;height:7px;color:#fffce8;-webkit-text-stroke:0.12px;transform:scaleX(0.9850);transform-origin:0 0;">MP5</div>
<div class="t" style="left:535.70px;top:257px;font-size:6.1px;line-height:7px;height:7px;color:#fffce8;-webkit-text-stroke:0.12px;transform:scaleX(0.9850);transform-origin:0 0;">0.23</div>
<div class="tm" style="left:532.2px;top:278.8px;width:58.40px;height:31.20px;background:linear-gradient(115deg,#ff9216,#ed750b)"></div>
<div class="t" style="left:535.70px;top:282px;font-size:6.1px;line-height:7px;height:7px;color:#fffce8;-webkit-text-stroke:0.12px;transform:scaleX(0.9850);transform-origin:0 0;">MP6</div>
<div class="t" style="left:535.70px;top:289px;font-size:6.1px;line-height:7px;height:7px;color:#fffce8;-webkit-text-stroke:0.12px;transform:scaleX(0.9850);transform-origin:0 0;">0.23</div>
<div class="tm" style="left:532.2px;top:311.2px;width:58.40px;height:30.00px;background:linear-gradient(115deg,#ff8e18,#ed710d)"></div>
<div class="t" style="left:535.70px;top:314px;font-size:6.1px;line-height:7px;height:7px;color:#fffce8;-webkit-text-stroke:0.12px;transform:scaleX(0.9850);transform-origin:0 0;">MP11</div>
<div class="t" style="left:535.70px;top:321px;font-size:6.1px;line-height:7px;height:7px;color:#fffce8;-webkit-text-stroke:0.12px;transform:scaleX(0.9850);transform-origin:0 0;">0.23</div>
<div class="tm" style="left:591.8px;top:247px;width:58.20px;height:31.00px;background:linear-gradient(115deg,#ff8e1c,#ed7110)"></div>
<div class="t" style="left:595.30px;top:250px;font-size:6.1px;line-height:7px;height:7px;color:#fffce8;-webkit-text-stroke:0.12px;transform:scaleX(0.9850);transform-origin:0 0;">MP1</div>
<div class="t" style="left:595.30px;top:257px;font-size:6.1px;line-height:7px;height:7px;color:#fffce8;-webkit-text-stroke:0.12px;transform:scaleX(0.9850);transform-origin:0 0;">0.23</div>
<div class="tm" style="left:591.8px;top:279.2px;width:58.20px;height:30.20px;background:linear-gradient(115deg,#ff881c,#ed6b10)"></div>
<div class="t" style="left:595.30px;top:282px;font-size:6.1px;line-height:7px;height:7px;color:#fffce8;-webkit-text-stroke:0.12px;transform:scaleX(0.9850);transform-origin:0 0;">MP15</div>
<div class="t" style="left:595.30px;top:289px;font-size:6.1px;line-height:7px;height:7px;color:#fffce8;-webkit-text-stroke:0.12px;transform:scaleX(0.9850);transform-origin:0 0;">0.23</div>
<div class="tm" style="left:591.8px;top:310.6px;width:58.20px;height:30.60px;background:linear-gradient(115deg,#ff7c1c,#ed6010)"></div>
<div class="t" style="left:595.30px;top:313px;font-size:6.1px;line-height:7px;height:7px;color:#fffce8;-webkit-text-stroke:0.12px;transform:scaleX(0.9850);transform-origin:0 0;">MP13</div>
<div class="t" style="left:595.30px;top:320px;font-size:6.1px;line-height:7px;height:7px;color:#fffce8;-webkit-text-stroke:0.12px;transform:scaleX(0.9850);transform-origin:0 0;">0.22</div>
<div class="tm" style="left:651.2px;top:247px;width:55.80px;height:31.00px;background:linear-gradient(115deg,#ff7820,#ed5d14)"></div>
<div class="t" style="left:654.70px;top:250px;font-size:6.1px;line-height:7px;height:7px;color:#fffce8;-webkit-text-stroke:0.12px;transform:scaleX(0.9850);transform-origin:0 0;">MP10</div>
<div class="t" style="left:654.70px;top:257px;font-size:6.1px;line-height:7px;height:7px;color:#fffce8;-webkit-text-stroke:0.12px;transform:scaleX(0.9850);transform-origin:0 0;">0.22</div>
<div class="tm" style="left:651.2px;top:279.2px;width:55.80px;height:30.20px;background:linear-gradient(115deg,#ff7220,#ed5712)"></div>
<div class="t" style="left:654.70px;top:282px;font-size:6.1px;line-height:7px;height:7px;color:#fffce8;-webkit-text-stroke:0.12px;transform:scaleX(0.9850);transform-origin:0 0;">MP3</div>
<div class="t" style="left:654.70px;top:289px;font-size:6.1px;line-height:7px;height:7px;color:#fffce8;-webkit-text-stroke:0.12px;transform:scaleX(0.9850);transform-origin:0 0;">0.22</div>
<div class="tm" style="left:651.2px;top:310.6px;width:55.80px;height:30.60px;background:linear-gradient(115deg,#ff681e,#ed4e10)"></div>
<div class="t" style="left:654.70px;top:313px;font-size:6.1px;line-height:7px;height:7px;color:#fffce8;-webkit-text-stroke:0.12px;transform:scaleX(0.9850);transform-origin:0 0;">MP9</div>
<div class="t" style="left:654.70px;top:320px;font-size:6.1px;line-height:7px;height:7px;color:#fffce8;-webkit-text-stroke:0.12px;transform:scaleX(0.9850);transform-origin:0 0;">0.22</div>
<div class="tm" style="left:708.2px;top:247px;width:37.40px;height:46.40px;background:linear-gradient(115deg,#ff6420,#ea4812)"></div>
<div class="t" style="left:711.70px;top:250px;font-size:6.1px;line-height:7px;height:7px;color:#fffce8;-webkit-text-stroke:0.12px;transform:scaleX(0.9850);transform-origin:0 0;">MP2</div>
<div class="t" style="left:711.70px;top:257px;font-size:6.1px;line-height:7px;height:7px;color:#fffce8;-webkit-text-stroke:0.12px;transform:scaleX(0.9850);transform-origin:0 0;">0.22</div>
<div class="tm" style="left:708.2px;top:294.6px;width:37.40px;height:46.60px;background:linear-gradient(115deg,#ff5a1e,#ea410e)"></div>
<div class="t" style="left:711.70px;top:297px;font-size:6.1px;line-height:7px;height:7px;color:#fffce8;-webkit-text-stroke:0.12px;transform:scaleX(0.9850);transform-origin:0 0;">MP14</div>
<div class="t" style="left:711.70px;top:304px;font-size:6.1px;line-height:7px;height:7px;color:#fffce8;-webkit-text-stroke:0.12px;transform:scaleX(0.9850);transform-origin:0 0;">0.22</div>
<div class="abs" style="left:751.200px;top:246.300px;width:4.600px;height:95.700px;background:linear-gradient(180deg,#18a838 0%,#58b42c 15%,#a4c020 30%,#f0c41c 46%,#ffa814 60%,#ff7c12 78%,#ff4a10 100%)"></div>
<div class="t" style="left:757.50px;top:247px;font-size:5.3px;line-height:6px;height:6px;color:#e8e8f0;font-weight:bold;-webkit-text-stroke:0.22px;transform:scaleX(1.0179);transform-origin:0 0;">0.26</div>
<div class="t" style="left:757.50px;top:291px;font-size:5.3px;line-height:6px;height:6px;color:#e8e8f0;font-weight:bold;-webkit-text-stroke:0.22px;transform:scaleX(1.0179);transform-origin:0 0;">0.24</div>
<div class="t" style="left:757.50px;top:334px;font-size:5.3px;line-height:6px;height:6px;color:#e8e8f0;font-weight:bold;-webkit-text-stroke:0.22px;transform:scaleX(1.0179);transform-origin:0 0;">0.22</div>
<div class="t" style="left:4.50px;top:400px;font-size:7.3px;line-height:9px;height:9px;color:#fff;font-weight:bold;-webkit-text-stroke:0.22px;transform:scaleX(0.8880);transform-origin:0 0;">Evolución de NDVI en</div>
<div class="t" style="left:73.70px;top:400px;font-size:7.3px;line-height:9px;height:9px;color:#fff;font-weight:bold;font-style:italic;-webkit-text-stroke:0.22px;transform:scaleX(0.8683);transform-origin:0 0;">IDAHUE</div>
<div class="t" style="left:4.50px;top:412px;font-size:6.6px;line-height:7px;height:7px;color:#86e3a4;font-style:italic;-webkit-text-stroke:0.12px;transform:scaleX(0.9063);transform-origin:0 0;">Para centrar el análisis en un lote hacer clic sobre su nombre</div>
<div class="abs" style="left:4.200px;top:428px;width:4px;height:4px;border-radius:50%;background:#ff8c1a"></div>
<div class="t" style="left:11.25px;top:427px;font-size:5.6px;line-height:6px;height:6px;color:#c8c9d8;-webkit-text-stroke:0.12px;transform:scaleX(0.9604);transform-origin:0 0;">C35 Lap/Colt 2017 4x2m</div>
<div class="abs" style="left:76.800px;top:428px;width:4px;height:4px;border-radius:50%;background:#1f9fd0"></div>
<div class="t" style="left:83.75px;top:427px;font-size:5.6px;line-height:6px;height:6px;color:#c8c9d8;-webkit-text-stroke:0.12px;transform:scaleX(0.9604);transform-origin:0 0;">C36 Lap/Colt 2017 4x2m</div>
<div class="t" style="left:15.50px;top:445px;font-size:4.5px;line-height:5px;height:5px;color:#e8e8f0;font-weight:bold;-webkit-text-stroke:0.22px;transform:scaleX(0.9192);transform-origin:0 0;">0.8</div>
<div class="abs" style="left:22px;top:449px;width:190px;height:1px;background:#2a2b50"></div>
<div class="abs" style="left:168px;top:388px;width:48px;height:11.200px;border:1px solid #7d7e9a;border-radius:3.500px;background:#151439"></div>
<svg class="abs" style="left:168px;top:387.800px" width="48" height="12" viewBox="0 0 48 12" fill="none" stroke="#c8c9d8" stroke-width="0.700">
<path d="M3.500 8.500 L7.500 3.500 M5.500 3.500 H7.500 V5.500 M3.500 6.500 V8.500 H5.500"/>
<path d="M11 3.200 H15.500 M12 4.800 H14.500 M13.250 4.800 V9 M12.300 8 L13.250 9 L14.200 8"/>
<path d="M22 9 V3.300 M20.300 5 L22 3.300 L23.700 5"/>
<path d="M30 3.300 V9 M28.300 7.300 L30 9 L31.700 7.300"/>
<path d="M35.500 2.500 V9.500" stroke="#5a5b78"/>
</svg>
<div class="abs" style="left:208.500px;top:390.500px;width:1.400px;height:1.400px;border-radius:50%;background:#d8d9e6"></div>
<div class="abs" style="left:208.500px;top:393.100px;width:1.400px;height:1.400px;border-radius:50%;background:#d8d9e6"></div>
<div class="abs" style="left:208.500px;top:395.700px;width:1.400px;height:1.400px;border-radius:50%;background:#d8d9e6"></div>

<div class="t" style="left:226.25px;top:400px;font-size:7.3px;line-height:9px;height:9px;color:#fff;font-weight:bold;-webkit-text-stroke:0.22px;transform:scaleX(0.9123);transform-origin:0 0;">Variación de NDVI</div>
<div class="t" style="left:234.50px;top:420px;font-size:4.5px;line-height:5px;height:5px;color:#e8e8f0;font-weight:bold;-webkit-text-stroke:0.22px;transform:scaleX(0.9591);transform-origin:0 0;">0.6</div>
<div class="t" style="left:234.50px;top:435px;font-size:4.5px;line-height:5px;height:5px;color:#e8e8f0;font-weight:bold;-webkit-text-stroke:0.22px;transform:scaleX(0.9591);transform-origin:0 0;">0.3</div>
<div class="abs" style="left:245px;top:422px;width:208px;height:1px;background:#26274c"></div>
<div class="abs" style="left:245px;top:437px;width:208px;height:1px;background:#26274c"></div>
<div class="abs" style="left:255px;top:447.4px;width:4px;height:3px;background:#16a0bc"></div>
<div class="abs" style="left:259.6px;top:447px;width:5px;height:0.8px;background:#16a0bc"></div>
<div class="abs" style="left:265.4px;top:443.9px;width:4px;height:3.5px;background:#16a0bc"></div>
<div class="abs" style="left:270.3px;top:436.9px;width:4.2px;height:7.5px;background:#16a0bc"></div>
<div class="abs" style="left:275px;top:437px;width:11px;height:0.8px;background:#16a0bc"></div>
<div class="abs" style="left:285.9px;top:433.9px;width:4.3px;height:3.5px;background:#16a0bc"></div>
<div class="abs" style="left:290.5px;top:434px;width:5.5px;height:0.8px;background:#16a0bc"></div>
<div class="abs" style="left:296px;top:433.9px;width:4.7px;height:2.1px;background:#c255cc"></div>
<div class="abs" style="left:301px;top:435.2px;width:5.5px;height:0.8px;background:#c255cc"></div>
<div class="abs" style="left:306.5px;top:434.2px;width:4.4px;height:1.8px;background:#16a0bc"></div>
<div class="abs" style="left:311.7px;top:434.2px;width:4.4px;height:1.5px;background:#c255cc"></div>
<div class="abs" style="left:317px;top:433.4px;width:4.4px;height:2.1px;background:#16a0bc"></div>
<div class="abs" style="left:322px;top:433.4px;width:4.6px;height:2.3px;background:#c255cc"></div>
<div class="abs" style="left:327.5px;top:434.2px;width:4.4px;height:1.5px;background:#16a0bc"></div>
<div class="abs" style="left:332.4px;top:434.2px;width:4.6px;height:1.8px;background:#c255cc"></div>
<div class="abs" style="left:337.6px;top:435.1px;width:4.4px;height:2.3px;background:#c255cc"></div>
<div class="abs" style="left:342.4px;top:437.2px;width:11px;height:0.8px;background:#c255cc"></div>
<div class="abs" style="left:353.4px;top:437.4px;width:4.2px;height:10.8px;background:#c255cc"></div>
<div class="abs" style="left:359px;top:446px;width:3.5px;height:2.6px;background:#16a0bc"></div>
<div class="abs" style="left:363.5px;top:446.5px;width:4.2px;height:3.5px;background:#c255cc"></div>
<div class="t" style="left:244.78px;top:445px;font-size:4.7px;line-height:5px;height:5px;color:#16a0bc;-webkit-text-stroke:0.12px;transform:scaleX(0.9300);transform-origin:0 0;opacity:.65;">0</div>
<div class="t" style="left:252.75px;top:440px;font-size:4.7px;line-height:5px;height:5px;color:#16a0bc;-webkit-text-stroke:0.12px;transform:scaleX(0.9300);transform-origin:0 0;opacity:.65;">0.03</div>
<div class="t" style="left:260.96px;top:436px;font-size:4.7px;line-height:5px;height:5px;color:#16a0bc;-webkit-text-stroke:0.12px;transform:scaleX(0.9300);transform-origin:0 0;opacity:.65;">0.1</div>
<div class="t" style="left:268.05px;top:430px;font-size:4.7px;line-height:5px;height:5px;color:#16a0bc;-webkit-text-stroke:0.12px;transform:scaleX(0.9300);transform-origin:0 0;opacity:.65;">0.12</div>
<div class="t" style="left:283.75px;top:427px;font-size:4.7px;line-height:5px;height:5px;color:#16a0bc;-webkit-text-stroke:0.12px;transform:scaleX(0.9300);transform-origin:0 0;opacity:.65;">0.05</div>
<div class="t" style="left:293.82px;top:438px;font-size:4.7px;line-height:5px;height:5px;color:#c255cc;-webkit-text-stroke:0.12px;transform:scaleX(0.9300);transform-origin:0 0;opacity:.65;">-0.03</div>
<div class="t" style="left:304.45px;top:427px;font-size:4.7px;line-height:5px;height:5px;color:#16a0bc;-webkit-text-stroke:0.12px;transform:scaleX(0.9300);transform-origin:0 0;opacity:.65;">0.02</div>
<div class="t" style="left:314.95px;top:426px;font-size:4.7px;line-height:5px;height:5px;color:#16a0bc;-webkit-text-stroke:0.12px;transform:scaleX(0.9300);transform-origin:0 0;opacity:.65;">0.03</div>
<div class="t" style="left:309.34px;top:438px;font-size:4.7px;line-height:5px;height:5px;color:#c255cc;-webkit-text-stroke:0.12px;transform:scaleX(0.9300);transform-origin:0 0;opacity:.65;">-0.03-0.04</div>
<div class="t" style="left:325.45px;top:427px;font-size:4.7px;line-height:5px;height:5px;color:#16a0bc;-webkit-text-stroke:0.12px;transform:scaleX(0.9300);transform-origin:0 0;opacity:.65;">0.02</div>
<div class="t" style="left:335.25px;top:440px;font-size:4.7px;line-height:5px;height:5px;color:#c255cc;-webkit-text-stroke:0.12px;transform:scaleX(0.9300);transform-origin:0 0;opacity:.65;">-0.03-0.1</div>
<div class="t" style="left:357.55px;top:439px;font-size:4.7px;line-height:5px;height:5px;color:#16a0bc;-webkit-text-stroke:0.12px;transform:scaleX(0.9300);transform-origin:0 0;opacity:.65;">0.04</div>
<div class="t" style="left:392.75px;top:446px;font-size:4.7px;line-height:5px;height:5px;color:#16a0bc;-webkit-text-stroke:0.12px;transform:scaleX(0.9300);transform-origin:0 0;opacity:.65;">0.01</div>
<div class="t" style="left:407.75px;top:445px;font-size:4.7px;line-height:5px;height:5px;color:#16a0bc;-webkit-text-stroke:0.12px;transform:scaleX(0.9300);transform-origin:0 0;opacity:.65;">0.04</div>
<div class="t" style="left:470.60px;top:400px;font-size:7.3px;line-height:9px;height:9px;color:#fff;font-weight:bold;-webkit-text-stroke:0.22px;transform:scaleX(0.8893);transform-origin:0 0;">Evolución por Miniparcela</div>
<div class="t" style="left:470.60px;top:413px;font-size:6.3px;line-height:7px;height:7px;color:#9c9db5;font-style:italic;-webkit-text-stroke:0.12px;transform:scaleX(0.9103);transform-origin:0 0;">Índice NDVI</div>
<div class="abs" style="left:469.40px;top:421.8px;width:19.19px;height:29.2px;background:linear-gradient(180deg,rgb(141,209,2) 0.00px,rgb(141,209,2) 3.28px,rgb(132,201,2) 3.28px,rgb(132,201,2) 6.56px,rgb(119,192,2) 6.56px,rgb(119,192,2) 9.84px,rgb(103,180,2) 9.84px,rgb(103,180,2) 13.12px,rgb(84,163,2) 13.12px,rgb(84,163,2) 16.40px,rgb(57,140,2) 16.40px,rgb(57,140,2) 19.68px,rgb(34,122,2) 19.68px,rgb(34,122,2) 22.96px,rgb(17,105,2) 22.96px,rgb(17,105,2) 26.24px,rgb(22,113,2) 26.24px,rgb(22,113,2) 29.20px)"></div>
<div class="abs" style="left:488.29px;top:421.8px;width:19.19px;height:29.2px;background:linear-gradient(180deg,rgb(140,208,2) 0.00px,rgb(140,208,2) 3.28px,rgb(130,200,2) 3.28px,rgb(130,200,2) 6.56px,rgb(117,190,2) 6.56px,rgb(117,190,2) 9.84px,rgb(101,178,2) 9.84px,rgb(101,178,2) 13.12px,rgb(81,161,2) 13.12px,rgb(81,161,2) 16.40px,rgb(53,137,2) 16.40px,rgb(53,137,2) 19.68px,rgb(30,118,2) 19.68px,rgb(30,118,2) 22.96px,rgb(13,101,2) 22.96px,rgb(13,101,2) 26.24px,rgb(20,111,2) 26.24px,rgb(20,111,2) 29.20px)"></div>
<div class="abs" style="left:507.19px;top:421.8px;width:19.19px;height:29.2px;background:linear-gradient(180deg,rgb(144,211,2) 0.00px,rgb(144,211,2) 3.28px,rgb(135,204,2) 3.28px,rgb(135,204,2) 6.56px,rgb(124,195,2) 6.56px,rgb(124,195,2) 9.84px,rgb(109,185,2) 9.84px,rgb(109,185,2) 13.12px,rgb(91,169,2) 13.12px,rgb(91,169,2) 16.40px,rgb(66,148,2) 16.40px,rgb(66,148,2) 19.68px,rgb(45,132,2) 19.68px,rgb(45,132,2) 22.96px,rgb(25,114,2) 22.96px,rgb(25,114,2) 26.24px,rgb(27,118,2) 26.24px,rgb(27,118,2) 29.20px)"></div>
<div class="abs" style="left:526.08px;top:421.8px;width:19.19px;height:29.2px;background:linear-gradient(180deg,rgb(143,210,2) 0.00px,rgb(143,210,2) 3.28px,rgb(134,203,2) 3.28px,rgb(134,203,2) 6.56px,rgb(123,194,2) 6.56px,rgb(123,194,2) 9.84px,rgb(108,184,2) 9.84px,rgb(108,184,2) 13.12px,rgb(89,168,2) 13.12px,rgb(89,168,2) 16.40px,rgb(64,147,2) 16.40px,rgb(64,147,2) 19.68px,rgb(43,130,2) 19.68px,rgb(43,130,2) 22.96px,rgb(23,112,2) 22.96px,rgb(23,112,2) 26.24px,rgb(26,117,2) 26.24px,rgb(26,117,2) 29.20px)"></div>
<div class="abs" style="left:544.98px;top:421.8px;width:19.19px;height:29.2px;background:linear-gradient(180deg,rgb(138,206,2) 0.00px,rgb(138,206,2) 3.28px,rgb(127,198,2) 3.28px,rgb(127,198,2) 6.56px,rgb(113,187,2) 6.56px,rgb(113,187,2) 9.84px,rgb(96,175,2) 9.84px,rgb(96,175,2) 13.12px,rgb(75,156,2) 13.12px,rgb(75,156,2) 16.40px,rgb(46,131,2) 16.40px,rgb(46,131,2) 19.68px,rgb(21,110,2) 19.68px,rgb(21,110,2) 22.96px,rgb(6,94,2) 22.96px,rgb(6,94,2) 26.24px,rgb(17,107,2) 26.24px,rgb(17,107,2) 29.20px)"></div>
<div class="abs" style="left:563.87px;top:421.8px;width:19.19px;height:29.2px;background:linear-gradient(180deg,rgb(148,214,2) 0.00px,rgb(148,214,2) 3.28px,rgb(141,208,2) 3.28px,rgb(141,208,2) 6.56px,rgb(133,201,2) 6.56px,rgb(133,201,2) 9.84px,rgb(120,193,2) 9.84px,rgb(120,193,2) 13.12px,rgb(103,180,2) 13.12px,rgb(103,180,2) 16.40px,rgb(82,163,2) 16.40px,rgb(82,163,2) 19.68px,rgb(65,150,2) 19.68px,rgb(65,150,2) 22.96px,rgb(40,130,2) 22.96px,rgb(40,130,2) 26.24px,rgb(35,127,2) 26.24px,rgb(35,127,2) 29.20px)"></div>
<div class="abs" style="left:582.76px;top:421.8px;width:19.19px;height:29.2px;background:linear-gradient(180deg,rgb(149,215,2) 0.00px,rgb(149,215,2) 3.28px,rgb(142,209,2) 3.28px,rgb(142,209,2) 6.56px,rgb(134,202,2) 6.56px,rgb(134,202,2) 9.84px,rgb(121,194,2) 9.84px,rgb(121,194,2) 13.12px,rgb(105,181,2) 13.12px,rgb(105,181,2) 16.40px,rgb(84,164,2) 16.40px,rgb(84,164,2) 19.68px,rgb(67,152,2) 19.68px,rgb(67,152,2) 22.96px,rgb(42,132,2) 22.96px,rgb(42,132,2) 26.24px,rgb(36,128,2) 26.24px,rgb(36,128,2) 29.20px)"></div>
<div class="abs" style="left:601.66px;top:421.8px;width:19.19px;height:29.2px;background:linear-gradient(180deg,rgb(148,214,2) 0.00px,rgb(148,214,2) 3.28px,rgb(141,208,2) 3.28px,rgb(141,208,2) 6.56px,rgb(133,201,2) 6.56px,rgb(133,201,2) 9.84px,rgb(120,193,2) 9.84px,rgb(120,193,2) 13.12px,rgb(103,180,2) 13.12px,rgb(103,180,2) 16.40px,rgb(82,163,2) 16.40px,rgb(82,163,2) 19.68px,rgb(65,150,2) 19.68px,rgb(65,150,2) 22.96px,rgb(40,130,2) 22.96px,rgb(40,130,2) 26.24px,rgb(35,127,2) 26.24px,rgb(35,127,2) 29.20px)"></div>
<div class="abs" style="left:620.55px;top:421.8px;width:19.19px;height:29.2px;background:linear-gradient(180deg,rgb(148,214,2) 0.00px,rgb(148,214,2) 3.28px,rgb(141,208,2) 3.28px,rgb(141,208,2) 6.56px,rgb(132,201,2) 6.56px,rgb(132,201,2) 9.84px,rgb(119,192,2) 9.84px,rgb(119,192,2) 13.12px,rgb(102,179,2) 13.12px,rgb(102,179,2) 16.40px,rgb(80,161,2) 16.40px,rgb(80,161,2) 19.68px,rgb(63,148,2) 19.68px,rgb(63,148,2) 22.96px,rgb(39,128,2) 22.96px,rgb(39,128,2) 26.24px,rgb(34,126,2) 26.24px,rgb(34,126,2) 29.20px)"></div>
<div class="abs" style="left:639.45px;top:421.8px;width:19.19px;height:29.2px;background:linear-gradient(180deg,rgb(149,215,2) 0.00px,rgb(149,215,2) 3.28px,rgb(142,209,2) 3.28px,rgb(142,209,2) 6.56px,rgb(134,202,2) 6.56px,rgb(134,202,2) 9.84px,rgb(121,194,2) 9.84px,rgb(121,194,2) 13.12px,rgb(105,181,2) 13.12px,rgb(105,181,2) 16.40px,rgb(84,164,2) 16.40px,rgb(84,164,2) 19.68px,rgb(67,152,2) 19.68px,rgb(67,152,2) 22.96px,rgb(42,132,2) 22.96px,rgb(42,132,2) 26.24px,rgb(36,128,2) 26.24px,rgb(36,128,2) 29.20px)"></div>
<div class="abs" style="left:658.34px;top:421.8px;width:19.19px;height:29.2px;background:linear-gradient(180deg,rgb(147,213,2) 0.00px,rgb(147,213,2) 3.28px,rgb(139,207,2) 3.28px,rgb(139,207,2) 6.56px,rgb(130,199,2) 6.56px,rgb(130,199,2) 9.84px,rgb(116,190,2) 9.84px,rgb(116,190,2) 13.12px,rgb(99,176,2) 13.12px,rgb(99,176,2) 16.40px,rgb(77,158,2) 16.40px,rgb(77,158,2) 19.68px,rgb(58,144,2) 19.68px,rgb(58,144,2) 22.96px,rgb(35,125,2) 22.96px,rgb(35,125,2) 26.24px,rgb(32,124,2) 26.24px,rgb(32,124,2) 29.20px)"></div>
<div class="abs" style="left:677.24px;top:421.8px;width:19.19px;height:29.2px;background:linear-gradient(180deg,rgb(147,214,2) 0.00px,rgb(147,214,2) 3.28px,rgb(140,207,2) 3.28px,rgb(140,207,2) 6.56px,rgb(131,200,2) 6.56px,rgb(131,200,2) 9.84px,rgb(118,191,2) 9.84px,rgb(118,191,2) 13.12px,rgb(101,178,2) 13.12px,rgb(101,178,2) 16.40px,rgb(79,160,2) 16.40px,rgb(79,160,2) 19.68px,rgb(61,146,2) 19.68px,rgb(61,146,2) 22.96px,rgb(37,127,2) 22.96px,rgb(37,127,2) 26.24px,rgb(33,125,2) 26.24px,rgb(33,125,2) 29.20px)"></div>
<div class="abs" style="left:696.13px;top:421.8px;width:19.19px;height:29.2px;background:linear-gradient(180deg,rgb(148,214,2) 0.00px,rgb(148,214,2) 3.28px,rgb(141,208,2) 3.28px,rgb(141,208,2) 6.56px,rgb(132,201,2) 6.56px,rgb(132,201,2) 9.84px,rgb(119,192,2) 9.84px,rgb(119,192,2) 13.12px,rgb(102,179,2) 13.12px,rgb(102,179,2) 16.40px,rgb(80,161,2) 16.40px,rgb(80,161,2) 19.68px,rgb(63,148,2) 19.68px,rgb(63,148,2) 22.96px,rgb(39,128,2) 22.96px,rgb(39,128,2) 26.24px,rgb(34,126,2) 26.24px,rgb(34,126,2) 29.20px)"></div>
<div class="abs" style="left:715.02px;top:421.8px;width:19.19px;height:29.2px;background:linear-gradient(180deg,rgb(145,212,2) 0.00px,rgb(145,212,2) 3.28px,rgb(137,205,2) 3.28px,rgb(137,205,2) 6.56px,rgb(127,197,2) 6.56px,rgb(127,197,2) 9.84px,rgb(113,187,2) 9.84px,rgb(113,187,2) 13.12px,rgb(95,173,2) 13.12px,rgb(95,173,2) 16.40px,rgb(71,153,2) 16.40px,rgb(71,153,2) 19.68px,rgb(52,138,2) 19.68px,rgb(52,138,2) 22.96px,rgb(30,119,2) 22.96px,rgb(30,119,2) 26.24px,rgb(29,121,2) 26.24px,rgb(29,121,2) 29.20px)"></div>
<div class="abs" style="left:733.92px;top:421.8px;width:19.19px;height:29.2px;background:linear-gradient(180deg,rgb(144,211,2) 0.00px,rgb(144,211,2) 3.28px,rgb(135,204,2) 3.28px,rgb(135,204,2) 6.56px,rgb(124,195,2) 6.56px,rgb(124,195,2) 9.84px,rgb(109,185,2) 9.84px,rgb(109,185,2) 13.12px,rgb(91,169,2) 13.12px,rgb(91,169,2) 16.40px,rgb(66,148,2) 16.40px,rgb(66,148,2) 19.68px,rgb(45,132,2) 19.68px,rgb(45,132,2) 22.96px,rgb(25,114,2) 22.96px,rgb(25,114,2) 26.24px,rgb(27,118,2) 26.24px,rgb(27,118,2) 29.20px)"></div>
<div class="abs" style="left:752.81px;top:421.8px;width:19.19px;height:29.2px;background:linear-gradient(180deg,rgb(146,212,2) 0.00px,rgb(146,212,2) 3.28px,rgb(138,206,2) 3.28px,rgb(138,206,2) 6.56px,rgb(128,198,2) 6.56px,rgb(128,198,2) 9.84px,rgb(114,188,2) 9.84px,rgb(114,188,2) 13.12px,rgb(96,174,2) 13.12px,rgb(96,174,2) 16.40px,rgb(73,155,2) 16.40px,rgb(73,155,2) 19.68px,rgb(54,140,2) 19.68px,rgb(54,140,2) 22.96px,rgb(32,121,2) 22.96px,rgb(32,121,2) 26.24px,rgb(30,122,2) 26.24px,rgb(30,122,2) 29.20px)"></div>
<div class="abs" style="left:771.71px;top:421.8px;width:19.19px;height:29.2px;background:linear-gradient(180deg,rgb(152,218,2) 0.00px,rgb(152,218,2) 3.28px,rgb(147,212,2) 3.28px,rgb(147,212,2) 6.56px,rgb(141,207,2) 6.56px,rgb(141,207,2) 9.84px,rgb(130,200,2) 9.84px,rgb(130,200,2) 13.12px,rgb(115,190,2) 13.12px,rgb(115,190,2) 16.40px,rgb(97,176,2) 16.40px,rgb(97,176,2) 19.68px,rgb(83,166,2) 19.68px,rgb(83,166,2) 22.96px,rgb(54,145,2) 22.96px,rgb(54,145,2) 26.24px,rgb(42,135,2) 26.24px,rgb(42,135,2) 29.20px)"></div>
<div class="abs" style="left:621px;top:431px;width:18.500px;height:2.200px;background:#c8f070;border-radius:1px"></div>
<div class="abs" style="left:715.500px;top:431.300px;width:12px;height:1.500px;background:#b0e45c;opacity:.55"></div>
<div class="abs" style="left:744.800px;top:440px;width:56px;height:11px;background:#fdfdfd;border-top-left-radius:1px"></div>
<svg class="abs" style="left:748.300px;top:442.300px" width="5.800" height="5.400" viewBox="0 0 6 6" preserveAspectRatio="none"><rect x="0.200" y="0.200" width="5.600" height="5.600" fill="#222"/><path d="M0.600 4.800 L2.200 2.600 L3.300 3.800 L4.200 3 L5.400 4.800Z" fill="#fff"/></svg>
<div class="t" style="left:755.50px;top:444px;font-size:4.8px;line-height:5px;height:5px;color:#333;-webkit-text-stroke:0.1px;transform:scaleX(0.8318);transform-origin:0 0;">Powered by QuickSight</div>
</div>
</body>
</html>
